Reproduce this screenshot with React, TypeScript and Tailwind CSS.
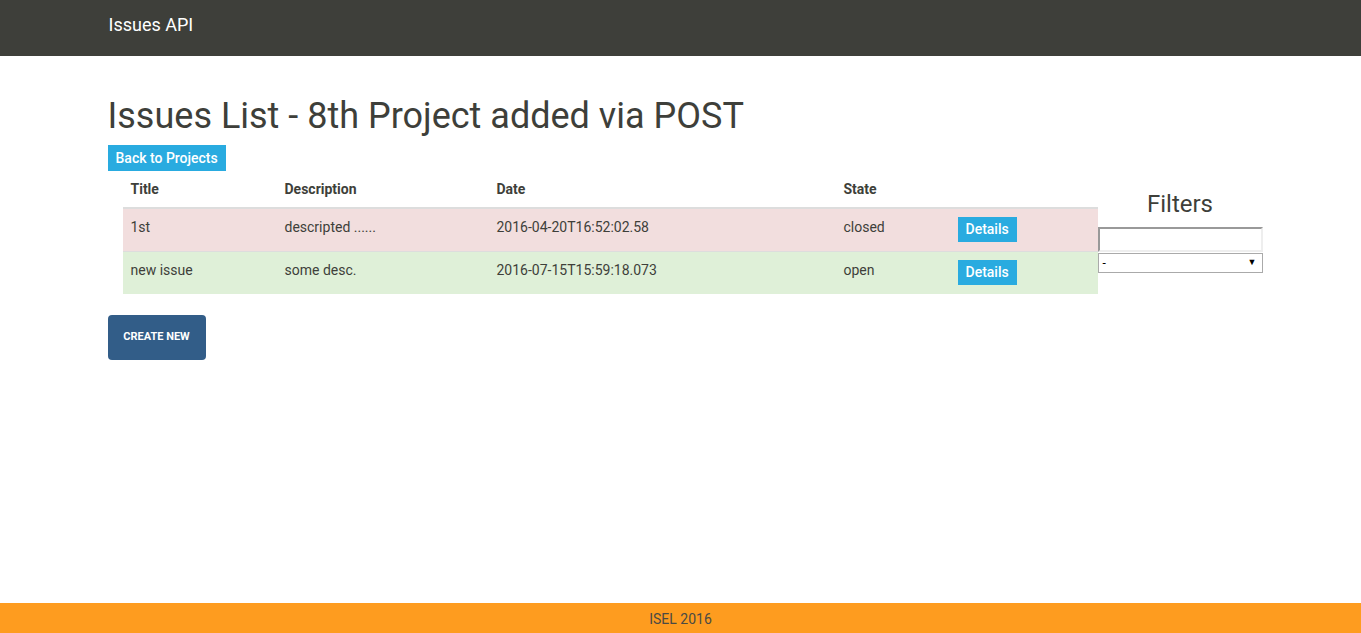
import React from "react";

const ISSUES = [
  {
    title: "1st",
    description: "descripted ......",
    date: "2016-04-20T16:52:02.58",
    state: "closed",
    row: "bg-[#f2dede]",
  },
  {
    title: "new issue",
    description: "some desc.",
    date: "2016-07-15T15:59:18.073",
    state: "open",
    row: "bg-[#dff0d8]",
  },
];

function Navbar() {
  return (
    <div className="h-[56px] bg-[#3e3f3a]">
      <div className="mx-auto flex h-full w-[1170px] items-center px-[13px] pb-2">
        <span className="text-[18px] text-white">Issues API</span>
      </div>
    </div>
  );
}

function IssuesTable() {
  return (
    <table className="w-full border-collapse text-[14px] leading-[20px] text-[#3e3f3a]">
      <thead>
        <tr className="border-b-2 border-[#ddd]">
          <th className="w-[154px] p-2 text-left font-bold">Title</th>
          <th className="w-[212px] p-2 text-left font-bold">Description</th>
          <th className="w-[347px] p-2 text-left font-bold">Date</th>
          <th className="w-[114px] p-2 text-left font-bold">State</th>
          <th className="p-2"></th>
        </tr>
      </thead>
      <tbody>
        {ISSUES.map((issue) => (
          <tr key={issue.title} className={`${issue.row} h-[43px] border-t border-[#ddd]`}>
            <td className="p-2 align-top">{issue.title}</td>
            <td className="p-2 align-top">{issue.description}</td>
            <td className="p-2 align-top">{issue.date}</td>
            <td className="p-2 align-top">{issue.state}</td>
            <td className="p-2 align-top">
              <button
                type="button"
                className="h-[25px] bg-[#29abe0] px-2 text-[14px] font-medium leading-[25px] text-white"
              >
                Details
              </button>
            </td>
          </tr>
        ))}
      </tbody>
    </table>
  );
}

function Filters() {
  return (
    <div className="flex w-[165px] shrink-0 flex-col pt-[20px]">
      <h3 className="mb-[10px] text-center text-[24px] leading-[26px] text-[#3e3f3a]">
        Filters
      </h3>
      <input
        type="text"
        className="h-[25px] w-full border-2 border-t-[#999] border-l-[#999] border-r-[#eee] border-b-[#eee] bg-white outline-none"
      />
      <div className="relative mt-[1px] flex h-[20px] w-full items-center border border-[#aaa] bg-white px-1 text-[12px] text-black">
        <span>-</span>
        <span className="absolute right-[5px] top-[2px] text-[9px]">▼</span>
      </div>
    </div>
  );
}

export default function App() {
  return (
    <div
      className="flex min-h-screen flex-col bg-white text-[#3e3f3a]"
      style={{ fontFamily: "Roboto, 'Liberation Sans', sans-serif" }}
    >
      <Navbar />
      <main className="flex-1">
        <div className="mx-auto w-[1170px] px-[12px]">
          <h1 className="mt-[38px] text-[36px] leading-[44px] text-[#3e3f3a]">
            Issues List - 8th Project added via POST
          </h1>
          <button
            type="button"
            className="mt-[7px] h-[26px] bg-[#29abe0] px-2 text-[14px] font-medium leading-[26px] text-white"
          >
            Back to Projects
          </button>
          <div className="flex">
            <div className="w-[990px] shrink-0 pl-[15px]">
              <IssuesTable />
            </div>
            <Filters />
          </div>
          <button
            type="button"
            className="mt-[21px] h-[45px] w-[98px] rounded bg-[#325d88] text-[11px] font-bold uppercase text-white"
          >
            Create New
          </button>
        </div>
      </main>
      <footer className="flex h-[30px] items-center justify-center bg-[#fe9c1f] pt-[3px] text-[14px] text-[#4a4a44]">
        ISEL 2016
      </footer>
    </div>
  );
}
